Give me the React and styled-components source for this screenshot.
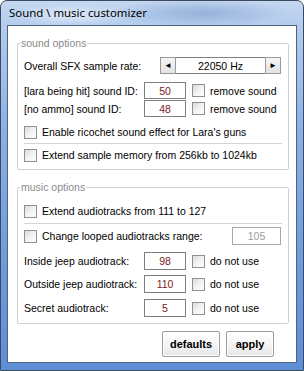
import styled, { createGlobalStyle } from "styled-components";

const Global = createGlobalStyle`
  html, body { margin: 0; padding: 0; background: #fff; }
  * { box-sizing: border-box; }
`;

const Frame = styled.div`
  width: 304px;
  height: 371px;
  border: 1px solid #3b4a5e;
  border-radius: 7px 7px 0 0;
  padding: 0 6px 7px 6px;
  display: flex;
  flex-direction: column;
  background:
    radial-gradient(ellipse 90px 14px at 200px 12px, rgba(120, 150, 200, 0.55), transparent),
    radial-gradient(ellipse 60px 12px at 70px 14px, rgba(255, 255, 255, 0.5), transparent),
    linear-gradient(to bottom, #c3d7f0 0px, #b5cdee 24px, #8fb2e4 120px, #6d9bdc 260px, #5d8fd6 370px);
`;

const TitleBar = styled.div`
  height: 24px;
  padding: 4px 0 0 2px;
  font-family: "Noto Sans", "Open Sans", sans-serif;
  font-size: 11.4px;
  color: #000;
  line-height: 16px;
`;

const Client = styled.div`
  flex: 1;
  background: #fff;
  border: 1px solid #4f6481;
  padding: 0 7px 0 9px;
  display: flex;
  flex-direction: column;
  font-family: "Liberation Sans", Arial, sans-serif;
  font-size: 10.5px;
  color: #000;
`;

const Group = styled.div`
  position: relative;
  margin-top: ${(p) => p.$top}px;
  border: 1px solid #d0d0d0;
  border-radius: 2px;
  padding: 0 6px ${(p) => p.$bottom}px 6px;
  display: flex;
  flex-direction: column;
`;

const Legend = styled.span`
  position: absolute;
  top: -8px;
  left: 2px;
  padding: 0 1px;
  background: #fff;
  color: #8a8a8a;
  font-size: 10.5px;
  line-height: 14px;
`;

const Row = styled.div`
  display: flex;
  align-items: center;
  height: ${(p) => p.$h || 16}px;
  margin-top: ${(p) => p.$top || 0}px;
`;

const Label = styled.span`
  width: ${(p) => p.$w}px;
  flex-shrink: 0;
  white-space: nowrap;
`;

const Divider = styled.div`
  height: 1px;
  background: #d4d4d4;
  margin-top: ${(p) => p.$top}px;
`;

const NumBox = styled.div`
  width: ${(p) => p.$w || 42}px;
  height: ${(p) => p.$h || 18}px;
  border: 1px solid ${(p) => (p.$off ? "#a8a8a8" : "#7f7f7f")};
  background: #fff;
  color: ${(p) => (p.$off ? "#9a9a9a" : "#7a1a1a")};
  display: flex;
  align-items: center;
  justify-content: center;
  margin-left: ${(p) => p.$ml || 0}px;
  flex-shrink: 0;
`;

const Check = styled.span`
  width: 13px;
  height: 13px;
  border: 1px solid #8f9092;
  background: linear-gradient(135deg, #dcdcdc 0%, #f4f4f4 55%, #ffffff 100%);
  margin-left: ${(p) => p.$ml || 0}px;
  margin-right: 5px;
  flex-shrink: 0;
`;

const Spinner = styled.div`
  display: flex;
  width: 121px;
  height: 17px;
  margin-left: ${(p) => p.$ml}px;
`;

const SpinBtn = styled.div`
  width: 16px;
  border: 1px solid #9a9a9a;
  background: linear-gradient(#f6f6f6, #e2e2e2);
  display: flex;
  align-items: center;
  justify-content: center;
  font-size: 8px;
  color: #000;
`;

const SpinField = styled.div`
  flex: 1;
  border-top: 1px solid #7f7f7f;
  border-bottom: 1px solid #7f7f7f;
  display: flex;
  align-items: center;
  justify-content: center;
`;

const Footer = styled.div`
  display: flex;
  justify-content: flex-end;
  gap: 6px;
  margin-top: 7px;
  padding-right: 15px;
`;

const Button = styled.button`
  width: ${(p) => p.$w}px;
  height: 26px;
  border: 1px solid #9c9c9c;
  border-radius: 2px;
  background: linear-gradient(#ffffff, #f3f3f3 60%, #e6e6e6);
  box-shadow: inset 0 0 0 1px #fff;
  font-family: "Liberation Sans", Arial, sans-serif;
  font-weight: bold;
  font-size: 11px;
  color: #000;
  padding: 0;
`;

function App() {
  return (
    <>
      <Global />
      <Frame>
        <TitleBar>Sound \ music customizer</TitleBar>
        <Client>
          <Group $top={17} $bottom={6}>
            <Legend>sound options</Legend>
            <Row $top={13} $h={17}>
              <Label $w={136}>Overall SFX sample rate:</Label>
              <Spinner $ml={0}>
                <SpinBtn>◄</SpinBtn>
                <SpinField>22050 Hz</SpinField>
                <SpinBtn>►</SpinBtn>
              </Spinner>
            </Row>
            <Row $top={8} $h={17}>
              <Label $w={120}>[lara being hit] sound ID:</Label>
              <NumBox $h={17}>50</NumBox>
              <Check $ml={6} />
              remove sound
            </Row>
            <Row $top={1} $h={17}>
              <Label $w={120}>[no ammo] sound ID:</Label>
              <NumBox $h={17}>48</NumBox>
              <Check $ml={6} />
              remove sound
            </Row>
            <Row $top={7}>
              <Check />
              Enable ricochet sound effect for Lara's guns
            </Row>
            <Divider $top={3} />
            <Row $top={3}>
              <Check />
              Extend sample memory from 256kb to 1024kb
            </Row>
          </Group>
          <Group $top={17} $bottom={6}>
            <Legend>music options</Legend>
            <Row $top={15}>
              <Check />
              Extend audiotracks from 111 to 127
            </Row>
            <Divider $top={4} />
            <Row $top={3} $h={18}>
              <Check />
              <Label $w={190}>Change looped audiotracks range:</Label>
              <NumBox $w={49} $off>105</NumBox>
            </Row>
            <Row $top={7} $h={18}>
              <Label $w={120}>Inside jeep audiotrack:</Label>
              <NumBox>98</NumBox>
              <Check $ml={6} />
              do not use
            </Row>
            <Row $top={5} $h={18}>
              <Label $w={120}>Outside jeep audiotrack:</Label>
              <NumBox>110</NumBox>
              <Check $ml={6} />
              do not use
            </Row>
            <Row $top={6} $h={18}>
              <Label $w={120}>Secret audiotrack:</Label>
              <NumBox>5</NumBox>
              <Check $ml={6} />
              do not use
            </Row>
          </Group>
          <Footer>
            <Button $w={58}>defaults</Button>
            <Button $w={48}>apply</Button>
          </Footer>
        </Client>
      </Frame>
    </>
  );
}

export default App;
